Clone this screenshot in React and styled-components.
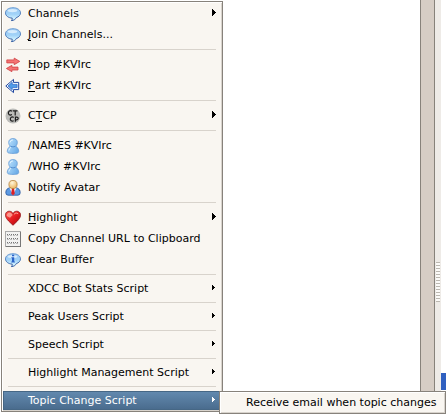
import React from 'react';
import styled, { createGlobalStyle, css } from 'styled-components';

const GlobalStyle = createGlobalStyle`
  * { box-sizing: border-box; }
  html, body { margin: 0; overflow: hidden; background: #fff; }
`;

const Window = styled.div`
  position: relative;
  width: 446px;
  height: 414px;
  overflow: hidden;
  background: #fff;
  font: 11px/19px "DejaVu Sans", Verdana, sans-serif;
  color: #000;
`;

const Workspace = styled.div`
  display: flex;
  height: 100%;
`;

const View = styled.div`
  width: 420px;
`;

const Gutter = styled.div`
  width: 15px;
  background: #d6cdc5;
  border: solid #87827b;
  border-width: 0 1px;
`;

const Splitter = styled.div`
  width: 6px;
  padding: 262px 0 0 1px;
  background: #eeebe7;
`;

const Grip = styled.div`
  width: 4px;
  height: 40px;
  background: repeating-linear-gradient(#bcb8b1 0 1px, #fbfaf8 1px 3px);
`;

const SidePane = styled.div`
  flex: 1;
  padding-top: 373px;
`;

const Selection = styled.div`
  height: 17px;
  background: #3060c0;
`;

const popup = css`
  position: absolute;
  background: #f9f6f1;
  border: 1px solid #87827b;
`;

const Menu = styled.div`
  ${popup}
  left: 1px;
  top: 1px;
  width: 222px;
  height: 411px;
  padding: 1px 1px 0;
  box-shadow: inset 1px 1px #fff, inset -1px -1px #d8d3cc;
`;

const Submenu = styled.div`
  ${popup}
  left: 219px;
  top: 391px;
  width: 227px;
  height: 23px;
  padding: 1px 0 0 26px;
  white-space: nowrap;
  box-shadow: inset 1px 1px #fff, inset -1px -1px #d8d3cc;
`;

const Row = styled.div`
  display: flex;
  align-items: center;
  height: ${(p) => (p.$compact ? 19 : 21)}px;
  padding: 0 5px 0 2px;
  white-space: nowrap;
  ${(p) =>
    p.$active &&
    css`
      color: #fff;
      background: linear-gradient(#6289ae, #4a6c8e);
      border: 1px solid #466785;
      padding: 0 4px 0 1px;
      line-height: 17px;
    `}
`;

const IconSlot = styled.span`
  display: flex;
  width: 16px;
  height: 16px;
  margin: 1px 7px 0 0;
`;

const Label = styled.span`
  flex: 1;
`;

const Key = styled.span`
  box-shadow: inset 0 -1px currentColor;
  display: inline-block;
  height: 12px;
  line-height: 12px;
`;

const Separator = styled.div`
  height: 1px;
  margin: 4px 5px;
  background: #d8d3cc;
`;

const Svg = styled.svg`
  display: block;
  width: 16px;
  height: 16px;
`;

const ArrowSvg = styled.svg`
  display: block;
  width: 4px;
  height: 7px;
  margin-bottom: 2px;
`;

function Arrow({ small }) {
  return (
    <ArrowSvg viewBox="0 0 4 7" fill="currentColor" shapeRendering="crispEdges">
      {small ? <path d="M0 1h1v1h1v1h1v1H2v1H1v1H0z" /> : <path d="M0 0h1v1h1v1h1v1h1v1H3v1H2v1H1v1H0z" />}
    </ArrowSvg>
  );
}

const bubblePath = 'M8 1.7C3.6 1.700.5 3.900.5 6.900c0 2.900 2.900 5 6.700 5.200.1 1-.1 1.800-.8 2.500 2.700-.2 4.300-1.500 4.900-3 2.500-.8 4.200-2.500 4.200-4.700 0-3-3.200-5.200-7.500-5.200z';

function Bubble({ info }) {
  return (
    <Svg viewBox="0 0 16 16">
      <defs>
        <linearGradient id="bubble" x2="0" y2="1">
          <stop stopColor="#9cc8f2" />
          <stop offset=".5" stopColor="#a0d2f8" />
          <stop offset=".85" stopColor="#d2f2ff" />
        </linearGradient>
        <linearGradient id="bubbleEdge" x2="0" y2="1">
          <stop stopColor="#6f9fd4" />
          <stop offset="1" stopColor="#2c559c" />
        </linearGradient>
      </defs>
      <path d={bubblePath} fill="url(#bubble)" stroke="url(#bubbleEdge)" />
      <ellipse cx="7.500" cy="4.600" rx="4.800" ry="1.700" fill="#e8f5ff" opacity=".75" />
      {info && <path d="M7 2.800h2.200v1.500H7zM6.400 5.200h2.800v4.300h.7v1H6.300v-1H7V6.200h-.6z" fill="#2a62c8" />}
    </Svg>
  );
}

function HopIcon() {
  return (
    <Svg viewBox="0 0 16 16" fill="#f47474" stroke="#d04043" strokeWidth=".8">
      <path d="M1.800 2.900h7.400V1.100l5.600 3.300-5.600 3.300V5.900H1.800z" />
      <path d="M13 10.100H6.900V8.300L1.400 11.500l5.500 3.200v-1.700H13z" />
    </Svg>
  );
}

function PartIcon() {
  return (
    <Svg viewBox="0 0 16 16">
      <path d="M8.500 1.400L.8 8l7.700 6.600v-3h5.200V4.400H8.500z" fill="#f6fbff" stroke="#2148a0" />
      <path d="M7.200 4.200L3 8l4.200 3.800V9.600h4.900V6.400H7.200z" fill="#4f9be8" stroke="#2862c4" strokeWidth=".7" />
    </Svg>
  );
}

function CtcpIcon() {
  return (
    <Svg viewBox="0 0 16 16">
      <circle cx="8" cy="8" r="7.500" fill="#bdbdba" />
      <g fill="none" stroke="#1c1c1c" strokeWidth="1.200">
        <path d="M7 3.300Q5.600 2.200 4.300 3 3 4 3.400 5.600 4 7.200 5.600 7.100l1.300-.6M7.800 2.900h4.700M10.200 2.900v4.700" />
        <path d="M8.700 9.500Q7.400 8.500 6.200 9.300 5 10.300 5.400 11.800q.6 1.500 2 1.400l1.300-.5M10.400 13.700V9.200h1.400q1.500.1 1.400 1.300-.1 1.200-1.400 1.300h-1.300" />
      </g>
    </Svg>
  );
}

function PersonIcon() {
  return (
    <Svg viewBox="0 0 16 16">
      <defs>
        <linearGradient id="person" x2="1" y2=".6">
          <stop stopColor="#c2e6ff" />
          <stop offset="1" stopColor="#6eaee8" />
        </linearGradient>
      </defs>
      <path
        d="M8 .6C5.200.6 3.700 2.100 3.700 4.400c0 1.700.7 2.900 1.500 3.800C3.300 9.500 2.300 11.300 2.300 13.200c0 1.600 1.200 2.200 5.700 2.200s5.700-.6 5.700-2.200c0-1.900-1-3.700-2.900-5 .8-.9 1.500-2.100 1.500-3.800C12.300 2.100 10.800.6 8 .6z"
        fill="url(#person)"
        stroke="#659bd6"
        strokeWidth=".8"
      />
      <path d="M5 4.400Q5.200 2 8 1.900M3.900 12.500Q4.200 10.400 6 9.300" fill="none" stroke="#e2f4ff" />
      <path d="M5.600 8.300Q8 9.600 10.400 8.300" fill="none" stroke="#558fd0" />
    </Svg>
  );
}

function AvatarIcon() {
  return (
    <Svg viewBox="0 0 16 16">
      <defs>
        <radialGradient id="face" cx=".4" cy=".3" r=".7">
          <stop stopColor="#fff6d9" />
          <stop offset="1" stopColor="#ecb55e" />
        </radialGradient>
      </defs>
      <path d="M.8 12.700Q.8 8.500 5 7.800h6q4.200.7 4.200 4.900 0 2.500-2.300 2.500H3.100Q.8 15.200.8 12.700z" fill="#5c9ae2" stroke="#24539d" strokeWidth=".8" />
      <path d="M4.500 8L8 15l3.500-7z" fill="#f7fbff" />
      <path d="M7 8h2l.8 5.500L8 15.400l-1.800-1.900z" fill="#dc1f24" />
      <circle cx="8" cy="4.500" r="4.100" fill="url(#face)" stroke="#b5833f" strokeWidth=".8" />
    </Svg>
  );
}

function HeartIcon() {
  return (
    <Svg viewBox="0 0 16 16">
      <defs>
        <linearGradient id="heart" x2="1" y2="1">
          <stop stopColor="#ff5b52" />
          <stop offset=".5" stopColor="#e51d20" />
          <stop offset="1" stopColor="#a90007" />
        </linearGradient>
      </defs>
      <path d="M8 3.600C6.800.8 2.800.4 1.100 2.800-.4 5 .7 7.900 3.500 10.900L8 15.300l4.500-4.400C15.300 7.900 16.400 5 14.900 2.800 13.200.4 9.200.8 8 3.600z" fill="url(#heart)" stroke="#8d1015" strokeWidth=".8" />
      <path d="M1.800 6Q1.800 2.500 4.700 2.500 6.600 2.600 7.700 5L5 7.700z" fill="#ffb5a9" opacity=".75" />
      <path d="M9 4.200Q11 1.900 13.200 3.700" fill="none" stroke="#ff9d92" />
    </Svg>
  );
}

function GridIcon() {
  return (
    <Svg viewBox="0 0 16 16" shapeRendering="crispEdges">
      <rect x=".5" y=".5" width="15" height="15" fill="#f2f2f1" stroke="#aaa" />
      <path d="M15.500 1v14.500H1" fill="none" stroke="#777" />
      <path d="M2 3.500h12M2 7.500h12M2 11.500h12" stroke="#777" strokeDasharray="1 1" />
      <path d="M2 4.500h12M2 8.500h12M2 12.500h12" stroke="#bbb" strokeDasharray="2 1" />
    </Svg>
  );
}

const groups = [
  [
    { text: 'Channels', icon: <Bubble />, arrow: true },
    { mnemonic: 'J', text: 'oin Channels...', icon: <Bubble /> },
  ],
  [
    { mnemonic: 'H', text: 'op #KVIrc', icon: <HopIcon /> },
    { mnemonic: 'P', text: 'art #KVIrc', icon: <PartIcon /> },
  ],
  [{ before: 'C', mnemonic: 'T', text: 'CP', icon: <CtcpIcon />, arrow: true }],
  [
    { text: '/NAMES #KVIrc', icon: <PersonIcon /> },
    { text: '/WHO #KVIrc', icon: <PersonIcon /> },
    { text: 'Notify Avatar', icon: <AvatarIcon /> },
  ],
  [
    { mnemonic: 'H', text: 'ighlight', icon: <HeartIcon />, arrow: true },
    { text: 'Copy Channel URL to Clipboard', icon: <GridIcon /> },
    { text: 'Clear Buffer', icon: <Bubble info /> },
  ],
  [{ text: 'XDCC Bot Stats Script', arrow: true, compact: true }],
  [{ text: 'Peak Users Script', arrow: true, compact: true }],
  [{ text: 'Speech Script', arrow: true, compact: true }],
  [{ text: 'Highlight Management Script', arrow: true, compact: true }],
  [{ text: 'Topic Change Script', arrow: true, compact: true, active: true }],
];

function MenuItem({ before, mnemonic, text, icon, arrow, compact, active }) {
  return (
    <Row $compact={compact} $active={active}>
      <IconSlot>{icon}</IconSlot>
      <Label>
        {before}
        {mnemonic && <Key>{mnemonic}</Key>}
        {text}
      </Label>
      {arrow && <Arrow small={compact} />}
    </Row>
  );
}

export default function App() {
  return (
    <Window>
      <GlobalStyle />
      <Workspace>
        <View />
        <Gutter />
        <Splitter>
          <Grip />
        </Splitter>
        <SidePane>
          <Selection />
        </SidePane>
      </Workspace>
      <Menu>
        {groups.map((items, g) => (
          <React.Fragment key={g}>
            {g > 0 && <Separator />}
            {items.map((item) => (
              <MenuItem key={item.text} {...item} />
            ))}
          </React.Fragment>
        ))}
      </Menu>
      <Submenu>Receive email when topic changes</Submenu>
    </Window>
  );
}
